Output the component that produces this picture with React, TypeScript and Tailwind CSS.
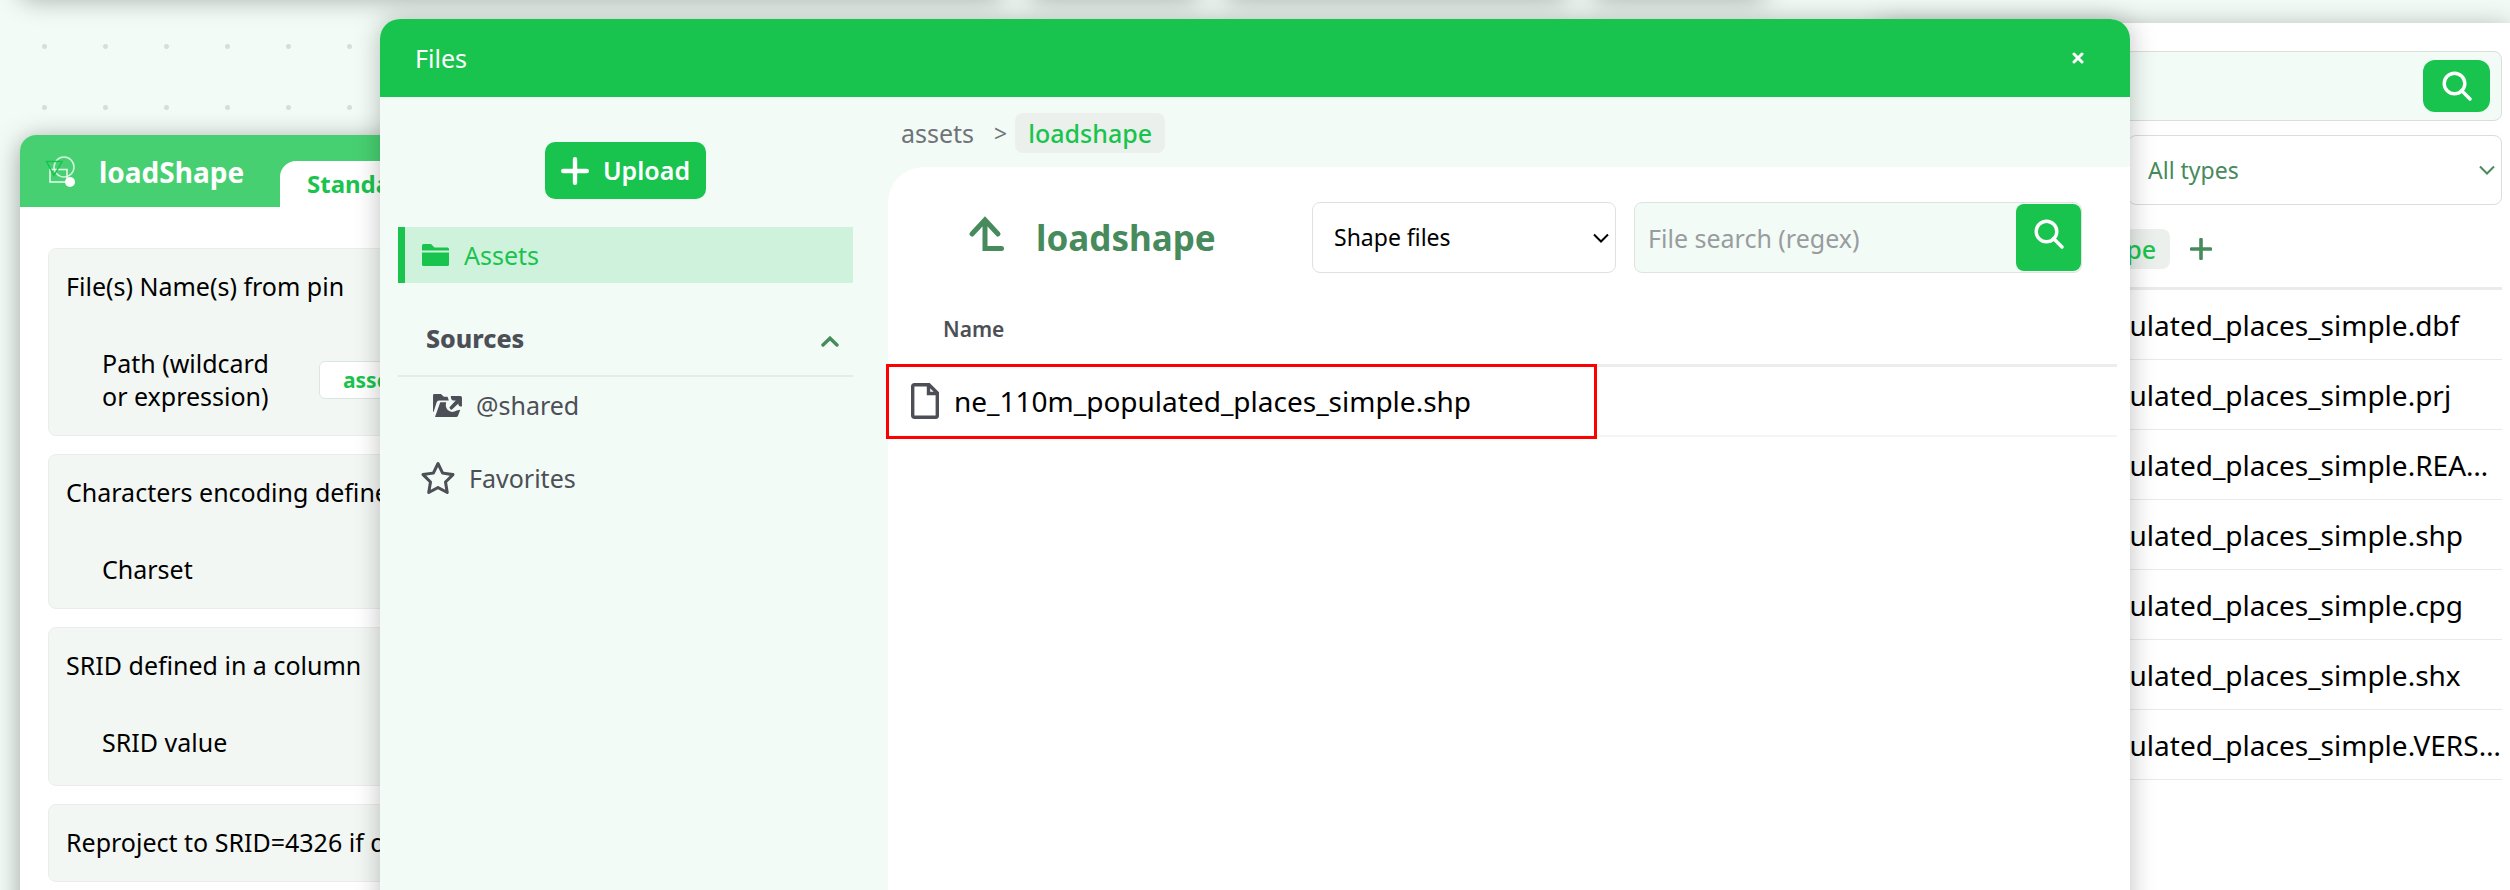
import React, { useState } from "react";
import { FaRegStar } from "react-icons/fa6";

const ASSET_FILES = [
  "ne_110m_populated_places_simple.dbf",
  "ne_110m_populated_places_simple.prj",
  "ne_110m_populated_places_simple.README.html",
  "ne_110m_populated_places_simple.shp",
  "ne_110m_populated_places_simple.cpg",
  "ne_110m_populated_places_simple.shx",
  "ne_110m_populated_places_simple.VERSION.txt",
];

type Field = {
  id: string;
  title: string;
  label?: string;
  inputClass?: string;
  value?: string;
};

const FIELDS: Field[] = [
  {
    id: "path",
    title: "File(s) Name(s) from pin",
    label: "Path (wildcard or expression)",
    inputClass:
      "h-[38px] grow self-center border border-[#dbe6df] px-[23px] text-[21px] font-bold text-[#18c44d]",
    value: "assets/loadshape",
  },
  {
    id: "charset",
    title: "Characters encoding defined in a column",
    label: "Charset",
    inputClass: "ml-auto h-[33px] w-[480px]",
  },
  {
    id: "srid",
    title: "SRID defined in a column",
    label: "SRID value",
    inputClass: "ml-auto h-[37px] w-[480px]",
  },
  { id: "reproject", title: "Reproject to SRID=4326 if different" },
];

export default function App() {
  return (
    <div className="relative h-screen overflow-hidden bg-[#f2fbf6] bg-[radial-gradient(circle,#d5dfd9_2px,transparent_3px)] bg-[size:61px_61px] bg-[position:14px_16px] font-['Noto_Sans',sans-serif] text-[25px] leading-[33px] text-black">
      <TopNodes />
      <NodeCard />
      <AssetsPanel />
      <FilesDialog />
    </div>
  );
}

// Bottom edges of the nodes that sit just above the visible canvas
function TopNodes() {
  return (
    <div className="absolute inset-x-0 -top-20 flex h-20 gap-6 pl-5">
      <div className="w-[984px] rounded-b-xl bg-white shadow-[0_0_26px_rgba(0,0,0,0.3)]" />
      <div className="w-[172px] rounded-b-xl bg-white shadow-[0_0_26px_rgba(0,0,0,0.3)]" />
      <div className="w-[344px] rounded-b-xl bg-white shadow-[0_0_26px_rgba(0,0,0,0.3)]" />
      <div className="w-[174px] rounded-b-xl bg-white shadow-[0_0_26px_rgba(0,0,0,0.3)]" />
    </div>
  );
}

function NodeCard() {
  return (
    <section className="absolute top-[135px] -bottom-20 left-5 w-[900px] overflow-hidden rounded-t-2xl bg-white shadow-[0_4px_26px_rgba(0,0,0,0.35)]">
      <header className="flex h-[72px] bg-[#47d072]">
        <div className="flex w-[260px] items-center gap-[23px] pt-[2px] pl-6">
          <ShapeIcon />
          <h2 className="text-[28px] font-bold text-white">loadShape</h2>
        </div>
        <button className="mt-[26px] rounded-t-2xl bg-white px-[27px] pb-[2px] text-[24px] font-bold text-[#18c44d]">
          Standard
        </button>
      </header>
      <div className="flex flex-col gap-[18px] px-7 pt-[41px]">
        {FIELDS.map((f) => (
          <div
            key={f.id}
            className="rounded-lg border border-[#ebedec] bg-[#f3f7f4] px-[17px] pt-[21px] pb-[22px]"
          >
            <p>{f.title}</p>
            {f.label && (
              <div className="mt-11 flex items-start pl-[36px]">
                <label htmlFor={f.id} className="w-[217px] pr-6">
                  {f.label}
                </label>
                <input
                  id={f.id}
                  defaultValue={f.value}
                  className={`rounded-md bg-white ${f.inputClass}`}
                />
              </div>
            )}
          </div>
        ))}
      </div>
    </section>
  );
}

function AssetsPanel() {
  return (
    <section className="absolute top-[23px] right-0 -bottom-10 w-[630px] bg-white pt-7 pr-2 shadow-[0_4px_26px_rgba(0,0,0,0.3)]">
      <div className="flex h-[70px] items-center rounded-lg border border-[#dadedb] bg-[#f2fbf6] pr-[11px]">
        <input aria-label="Search" className="h-full min-w-0 grow px-4" />
        <button
          aria-label="Search"
          className="flex h-[52px] w-[67px] items-center justify-center rounded-xl bg-[#18c44d] text-white"
        >
          <SearchIcon />
        </button>
      </div>
      <div className="mt-[14px] flex justify-end">
        <div className="relative w-[374px]">
          <select
            aria-label="File type"
            className="h-[70px] w-full appearance-none rounded-lg border border-[#dadedb] bg-white px-[19px] text-[23px] text-[#478a5c]"
          >
            <option>All types</option>
          </select>
          <SelectArrow className="text-[#478a5c]" />
        </div>
      </div>
      <div className="mt-6 flex h-10 items-center justify-end pr-[290px]">
        <span className="rounded-lg bg-[#ebf0ec] px-[14px] py-[3px] leading-[34px] font-medium text-[#18c44d]">
          loadshape
        </span>
        <button aria-label="New folder" className="ml-5 text-[#478a5c]">
          <svg width="22" height="22" viewBox="0 0 22 22" fill="none">
            <path d="M11 1.5v19M1.5 11h19" stroke="currentColor" strokeWidth="3.6" strokeLinecap="round" />
          </svg>
        </button>
      </div>
      <ul className="mt-[18px] border-t-[3px] border-[#ebebeb] text-[28px]">
        {ASSET_FILES.map((name) => (
          <li
            key={name}
            className="flex h-[70px] items-center gap-4 border-b border-[#e8e9e8] pl-[22px] text-[#4d4f57]"
          >
            <FileIcon />
            <span className="min-w-0 grow truncate leading-10 text-black">{name}</span>
          </li>
        ))}
      </ul>
    </section>
  );
}

function FilesDialog() {
  const [search, setSearch] = useState("");

  return (
    <section
      role="dialog"
      aria-label="Files"
      className="absolute top-[19px] right-[380px] -bottom-10 left-[380px] flex flex-col overflow-hidden rounded-[20px] bg-[#f2fbf6] shadow-[0_0_26px_rgba(0,0,0,0.25)]"
    >
      <header className="flex h-[78px] shrink-0 items-center justify-between bg-[#18c44d] pr-[46px] pl-[35px] text-white">
        <h1>Files</h1>
        <button aria-label="Close">
          <svg width="12" height="12" viewBox="0 0 12 12" fill="none">
            <path d="M2 2l8 8M10 2l-8 8" stroke="currentColor" strokeWidth="3" strokeLinecap="round" />
          </svg>
        </button>
      </header>
      <div className="flex grow">
        <Sidebar />
        <div className="flex grow flex-col">
          <nav className="flex h-[70px] items-center pt-[2px] pl-[13px] text-[#6f7377]">
            <a href="#assets">assets</a>
            <span className="ml-5 text-[23px]">&gt;</span>
            <a
              href="#loadshape"
              className="ml-2 rounded-lg bg-[#ebf0ec] px-[13px] py-[3px] leading-[34px] font-medium text-[#18c44d]"
            >
              loadshape
            </a>
          </nav>
          <div className="grow rounded-tl-[36px] bg-white pr-[13px]">
            <div className="flex items-center pt-[35px] pr-[35px] pl-20">
              <button aria-label="Parent folder" className="pb-2 text-[#478a5c]">
                <svg width="37" height="36" viewBox="0 0 37 36" fill="none">
                  <path
                    d="M4 18L17 4L30 18M17 5V32.5H33.5"
                    stroke="currentColor"
                    strokeWidth="5"
                    strokeLinecap="round"
                  />
                </svg>
              </button>
              <h2 className="ml-[31px] grow text-[35px] leading-[48px] font-bold text-[#478a5c]">
                loadshape
              </h2>
              <div className="relative w-[304px]">
                <select
                  aria-label="File filter"
                  className="h-[71px] w-full appearance-none rounded-lg border border-[#dfe0df] bg-white px-[21px] text-[23px]"
                >
                  <option>Shape files</option>
                </select>
                <SelectArrow className="text-black" />
              </div>
              <div className="ml-[18px] flex h-[71px] w-[448px] items-center rounded-lg border border-[#dfe3e0] bg-[#f2fbf6]">
                <input
                  aria-label="File search"
                  placeholder="File search (regex)"
                  value={search}
                  onChange={(e) => setSearch(e.target.value)}
                  className="h-full min-w-0 grow px-[13px] outline-none placeholder:text-[#999c9f]"
                />
                <button
                  aria-label="Search"
                  className="flex h-[67px] w-[65px] shrink-0 items-center justify-center rounded-lg bg-[#18c44d] pb-2 text-white"
                >
                  <SearchIcon />
                </button>
              </div>
            </div>
            <table className="mt-10 w-full text-left">
              <thead>
                <tr className="border-b-[3px] border-[#ededed]">
                  <th className="h-[36px] pb-[18px] pl-[55px] text-[21px] font-semibold text-[#4d4f57]">
                    Name
                  </th>
                </tr>
              </thead>
              <tbody>
                <tr className="border-b-2 border-[#f5f5f5]">
                  <td className="relative h-[70px]">
                    <span className="flex items-center gap-[15px] pl-[23px] text-[28px] leading-10">
                      <span className="text-[#4d4f57]">
                        <FileIcon />
                      </span>
                      ne_110m_populated_places_simple.shp
                    </span>
                    {/* selection marker */}
                    <span className="absolute -top-[3px] -left-[2px] h-[75px] w-[711px] border-[3px] border-[#ff0000]" />
                  </td>
                </tr>
              </tbody>
            </table>
          </div>
        </div>
      </div>
    </section>
  );
}

function Sidebar() {
  return (
    <aside className="flex w-[508px] shrink-0 flex-col pt-[45px] pr-[35px] pl-[18px] text-[#4d4f57]">
      <button className="flex h-[57px] items-center gap-[14px] self-center rounded-[10px] bg-[#18c44d] px-4 font-semibold text-white">
        <svg width="28" height="28" viewBox="0 0 28 28" fill="none">
          <path d="M14 2.2v23.6M2.2 14h23.6" stroke="currentColor" strokeWidth="4.4" strokeLinecap="round" />
        </svg>
        Upload
      </button>
      <a
        href="#assets"
        className="mt-7 flex h-14 items-center gap-[15px] border-l-[7px] border-[#18c44d] bg-[#cff2dc] pl-[17px] text-[#18c44d]"
      >
        <svg width="27" height="22" viewBox="0 0 27 22" fill="currentColor">
          <path d="M1.5 0H9L12.5 3.5H25.5Q27 3.5 27 5V6.5H0V1.5Q0 0 1.5 0Z" />
          <path d="M0 8.5H27V20.5Q27 22 25.5 22H1.5Q0 22 0 20.5Z" />
        </svg>
        Assets
      </a>
      <div className="mt-[39px] flex h-[55px] items-start justify-between border-b-2 border-[#e6ebe8] pr-[14px] pl-7">
        <h3 className="font-extrabold">Sources</h3>
        <button aria-label="Collapse sources" className="mt-[14px] text-[#478a5c]">
          <svg width="18" height="11" viewBox="0 0 18 11" fill="none">
            <path d="M2 9L9 2.2L16 9" stroke="currentColor" strokeWidth="3.4" strokeLinecap="round" />
          </svg>
        </button>
      </div>
      <a href="#shared" className="mt-3 flex items-center gap-[14px] pl-[35px]">
        <SharedFolderIcon />
        @shared
      </a>
      <a href="#favorites" className="mt-[38px] flex items-center gap-[13px] pl-[22px]">
        <FaRegStar size={36} />
        Favorites
      </a>
    </aside>
  );
}

function SelectArrow({ className }: { className: string }) {
  return (
    <svg
      width="16"
      height="10"
      viewBox="0 0 16 10"
      fill="none"
      className={`pointer-events-none absolute top-1/2 right-[7px] -translate-y-1/2 ${className}`}
    >
      <path d="M1 1.5L8 8.5L15 1.5" stroke="currentColor" strokeWidth="2" />
    </svg>
  );
}

function SearchIcon() {
  return (
    <svg width="30" height="30" viewBox="0 0 30 30" fill="none">
      <circle cx="12.5" cy="12.5" r="10.3" stroke="currentColor" strokeWidth="3.4" />
      <path d="M19.5 19.5L28 28" stroke="currentColor" strokeWidth="3.4" strokeLinecap="round" />
    </svg>
  );
}

function FileIcon() {
  return (
    <svg width="28" height="36" viewBox="0 0 28 36" fill="none" className="shrink-0">
      <path
        d="M3.5 1.7H18L26.3 10V32.5Q26.3 34.3 24.5 34.3H3.5Q1.7 34.3 1.7 32.5V3.5Q1.7 1.7 3.5 1.7Z"
        stroke="currentColor"
        strokeWidth="3.4"
      />
      <path d="M17.5 2V10.5H26" stroke="currentColor" strokeWidth="3.4" />
    </svg>
  );
}

function SharedFolderIcon() {
  return (
    <svg width="29" height="23" viewBox="0 0 88 70" fill="currentColor">
      <path d="M0 4Q0 0 4 0H24L33 8H44Q46 12 48 20H18Q13 20 11 25L2 54H0Z" />
      <path d="M22 25H40Q36 38 44 48Q56 60 72 50L83 48L76 66Q75 70 70 70H6Z" />
      <path d="M54 6H83Q88 6 88 11V37Q80 40 77 33V29L57 48Q51 48 50 40L69 20H60Q53 16 54 6Z" />
    </svg>
  );
}

function ShapeIcon() {
  return (
    <svg width="32" height="32" viewBox="0 0 32 32" fill="none">
      <circle cx="20" cy="11" r="10" stroke="#d3f5de" strokeWidth="1.5" />
      <path d="M6 13.5H23V26H6Z" stroke="#e9faee" strokeWidth="1.5" />
      <path d="M2.5 5.5H18L10 19.5Z" stroke="#18c44d" strokeWidth="1.5" />
      <circle cx="26" cy="26" r="5" fill="#fff" />
    </svg>
  );
}
